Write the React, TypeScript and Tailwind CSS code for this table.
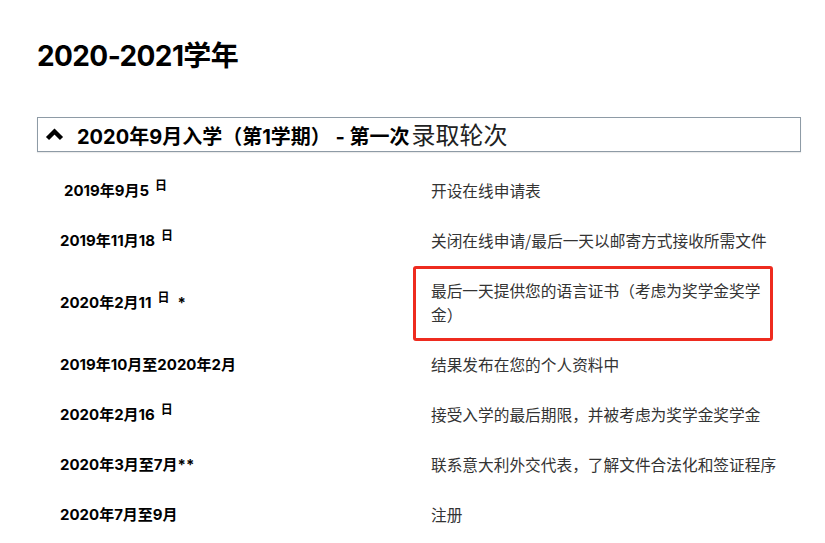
const rows: { date: React.ReactNode; text: string; boxed?: boolean; indent?: boolean }[] = [
  { date: <>2019年9月5<sup className="ml-[6px] text-[12px]">日</sup></>, text: '开设在线申请表', indent: true },
  { date: <>2019年11月18<sup className="ml-[6px] text-[12px]">日</sup></>, text: '关闭在线申请/最后一天以邮寄方式接收所需文件' },
  {
    date: <>2020年2月11<sup className="ml-[6px] text-[12px]">日</sup><span className="ml-[8px]">*</span></>,
    text: '最后一天提供您的语言证书（考虑为奖学金奖学金）',
    boxed: true,
  },
  { date: '2019年10月至2020年2月', text: '结果发布在您的个人资料中' },
  { date: <>2020年2月16<sup className="ml-[6px] text-[12px]">日</sup></>, text: '接受入学的最后期限，并被考虑为奖学金奖学金' },
  { date: '2020年3月至7月**', text: '联系意大利外交代表，了解文件合法化和签证程序' },
  { date: '2020年7月至9月', text: '注册' },
]

const latin = "font-['Inter','Noto_Sans_CJK_SC',sans-serif]"
const cjk = "font-['Noto_Sans_CJK_SC','Noto_Sans',sans-serif]"

export default function App() {
  return (
    <div className={`min-h-screen bg-white pl-[37px] pt-[39px] text-black ${latin}`}>
      {/* Title */}
      <h1 className="text-[28px] font-bold leading-[34px] tracking-[-0.6px]">2020-2021学年</h1>

      {/* Accordion header */}
      <div className="mt-[44px] flex h-[35px] w-[764px] items-center border border-[#8e9ba6] pl-[7px] shadow-[0_1px_1px_rgba(0,0,0,0.08)]">
        <svg width="19" height="13" viewBox="0 0 19 13" className="mr-[13px] shrink-0">
          <polyline points="2.5,10.5 9.5,3.5 16.5,10.5" fill="none" stroke="#000" strokeWidth="4.4" strokeLinejoin="miter" />
        </svg>
        <span className="text-[20px] font-bold leading-none">
          2020年9月入学（第1学期） - 第一次
          <span className={`ml-[2px] text-[24px] font-normal text-[#222] ${cjk}`}>录取轮次</span>
        </span>
      </div>

      {/* Schedule */}
      <div className="mt-[14px]">
        {rows.map((r, i) => (
          <div key={i} className={`flex items-center ${r.boxed ? 'h-[74px]' : 'h-[50px]'}`}>
            <div className={`w-[376px] shrink-0 text-[15px] font-bold ${r.indent ? 'pl-[27px]' : 'pl-[23px]'}`}>
              {r.date}
            </div>
            {r.boxed ? (
              <div
                className={`flex h-[75px] w-[360px] items-center rounded-[3px] border-[3px] border-[#ee2b1f] pl-[15px] pr-[2px] text-[15.7px] leading-[24px] text-[#333] ${cjk}`}
              >
                {r.text}
              </div>
            ) : (
              <div className={`whitespace-nowrap pl-[18px] text-[15.7px] leading-[24px] text-[#333] ${cjk}`}>{r.text}</div>
            )}
          </div>
        ))}
      </div>
    </div>
  )
}
